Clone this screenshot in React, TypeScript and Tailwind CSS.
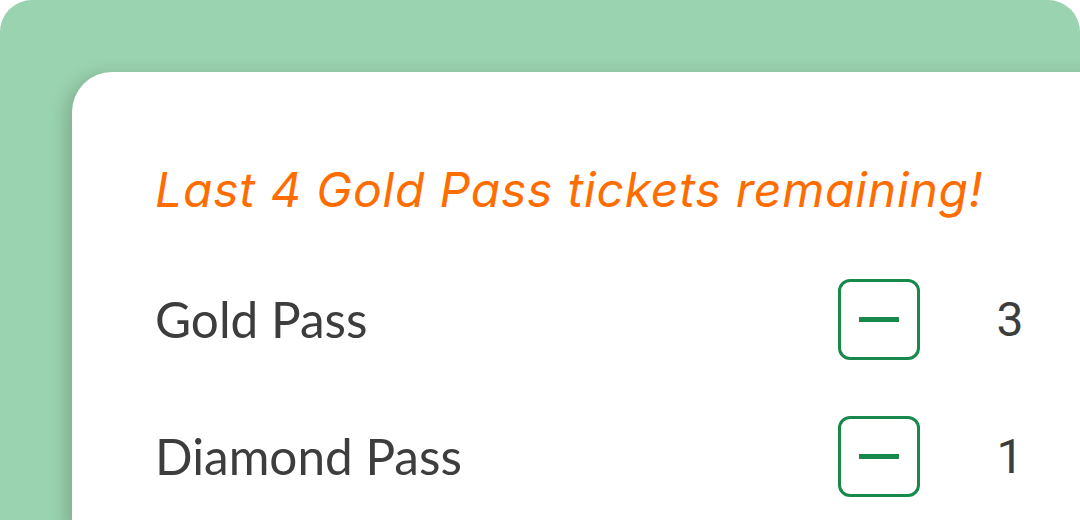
import React from "react";

function MinusButton() {
  return (
    <button className="w-[82px] h-[81px] rounded-[12px] border-[3px] border-[#17894b] flex items-center justify-center bg-white">
      <span className="block w-[40px] h-[5px] bg-[#17894b]" />
    </button>
  );
}

function Row({ label, count }: { label: string; count: number }) {
  return (
    <div className="flex items-center h-[81px]">
      <div className="flex-1 text-[49.5px] text-[#3d3d3d]" style={{ fontFamily: "Lato, sans-serif" }}>
        {label}
      </div>
      <MinusButton />
      <div
        className="w-[180px] text-center text-[48px] text-[#3d3d3d]"
        style={{ fontFamily: "Roboto, sans-serif" }}
      >
        {count}
      </div>
    </div>
  );
}

export default function App() {
  return (
    <div className="w-[1080px] h-[520px] bg-white overflow-hidden">
      <div className="w-[1080px] h-[520px] bg-[#9ad3af] rounded-t-[32px] pl-[72px] pt-[72px] overflow-hidden">
        <div className="w-[1100px] h-[460px] bg-white rounded-tl-[40px] shadow-[-6px_4px_18px_rgba(0,0,0,0.18)] pl-[83px] pt-[90px]">
          <div className="w-[945px]">
            <div
              className="text-[48px] italic text-[#ff6d00] leading-[56px] tracking-[0.8px]"
              style={{ fontFamily: "Inter, sans-serif" }}
            >
              Last 4 Gold Pass tickets remaining!
            </div>
            <div className="mt-[61px] flex flex-col gap-[56px]">
              <Row label="Gold Pass" count={3} />
              <Row label="Diamond Pass" count={1} />
            </div>
          </div>
        </div>
      </div>
    </div>
  );
}
